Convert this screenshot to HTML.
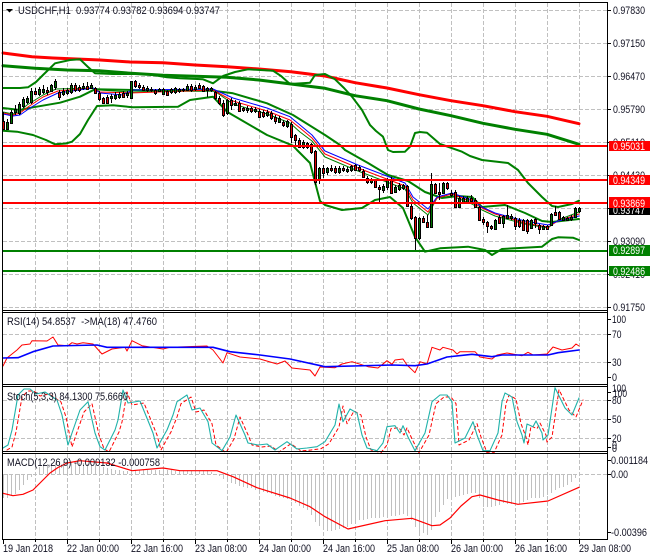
<!DOCTYPE html>
<html><head><meta charset="utf-8"><style>
html,body{margin:0;padding:0;background:#fff;width:650px;height:560px;overflow:hidden}
svg{display:block}
text{font-family:"Liberation Sans",sans-serif;font-size:11px;fill:#111122}
.w{fill:#fff}
.g{fill:none;stroke:#c0c0c0;stroke-width:1;stroke-dasharray:4 2;shape-rendering:crispEdges}
.l{fill:none;stroke-linejoin:round;stroke-linecap:round}
</style></head><body>
<svg width="650" height="560" viewBox="0 0 650 560" xmlns="http://www.w3.org/2000/svg">
<!-- grid -->
<path class="g" d="M3 10.5H607M3 43.5H607M3 76.5H607M3 109.5H607M3 142.5H607M3 175.5H607M3 208.5H607M3 241.5H607M3 274.5H607M3 307.5H607"/>
<path class="g" d="M35.5 3V310M67.5 3V310M99.5 3V310M131.5 3V310M163.5 3V310M195.5 3V310M227.5 3V310M259.5 3V310M291.5 3V310M323.5 3V310M355.5 3V310M387.5 3V310M419.5 3V310M451.5 3V310M483.5 3V310M515.5 3V310M547.5 3V310M579.5 3V310"/>
<path class="g" d="M3 334.5H607M3 362.5H607M35.5 313V384M67.5 313V384M99.5 313V384M131.5 313V384M163.5 313V384M195.5 313V384M227.5 313V384M259.5 313V384M291.5 313V384M323.5 313V384M355.5 313V384M387.5 313V384M419.5 313V384M451.5 313V384M483.5 313V384M515.5 313V384M547.5 313V384M579.5 313V384"/>
<path class="g" d="M3 400.5H607M3 419.5H607M3 438.5H607M35.5 387V451M67.5 387V451M99.5 387V451M131.5 387V451M163.5 387V451M195.5 387V451M227.5 387V451M259.5 387V451M291.5 387V451M323.5 387V451M355.5 387V451M387.5 387V451M419.5 387V451M451.5 387V451M483.5 387V451M515.5 387V451M547.5 387V451M579.5 387V451"/>
<path class="g" d="M3 474.5H607M35.5 454V539M67.5 454V539M99.5 454V539M131.5 454V539M163.5 454V539M195.5 454V539M227.5 454V539M259.5 454V539M291.5 454V539M323.5 454V539M355.5 454V539M387.5 454V539M419.5 454V539M451.5 454V539M483.5 454V539M515.5 454V539M547.5 454V539M579.5 454V539"/>

<!-- Bollinger / MAs -->
<polyline class="l" stroke="#ff0000" stroke-width="3" points="3,53 32,56.7 53,58 100,60 130,62 163,62.7 195,65 227,66.7 259,69 291,71.7 325,76 355,82.7 387,88 419,94.7 451,100.7 483,105.7 515,111.7 547,116.3 579,123.7"/>
<polyline class="l" stroke="#008000" stroke-width="3" points="3,65.7 35,68.3 67,70 99,70.7 131,73.3 163,75.3 195,76.3 227,77.3 259,80 291,84 325,88.3 355,95.7 387,100.7 419,109 451,115.7 483,123.3 515,129.3 547,134.3 579,144.3"/>
<polyline class="l" stroke="#008000" stroke-width="2" points="3,88 20,88 28,87.3 36,82 43,75 55,63.3 70,60 80,59.3 88,67 95,73.3 113,74 147,74 167,77.3 180,78.3 203,79.3 213,83.3 223,76 235,72 248,69.3 273,70.7 281,76 290,84 310,82.7 315,75 325,74 335,79.3 344,88 352,96.7 362,110 370,125 376,131 383,136.7 388,150 393,152 405,151.7 410,146.7 415,133 420,132 427,132.7 440,144 462,151.7 470,156 482,160 508,163 518,170 528,183 542,197 552,206 558,207 572,204 579,200.7"/>
<polyline class="l" stroke="#008000" stroke-width="2" points="3,108 20,110 33,107.3 60,102.7 80,96.7 95,89.3 133,90 173,90.7 213,90.7 233,93.3 267,103.3 293,115 325,135 340,145 345,150 368,163 388,175 408,181 425,192 442,198 458,196 472,197 482,207 505,205 525,213 542,221 552,222 579,219"/>
<polyline class="l" stroke="#008000" stroke-width="2" points="3,130.7 17,131.7 33,135 46,140 55,144.3 66,143.5 72,141.7 80,134 88,120 97,106 113,105.3 133,107.3 178,106.7 190,100 213,96.7 227,111.7 267,135 293,145.7 297,150 310,163 315,182 320,201 325,205 342,210 362,208 375,200 390,197 403,208 415,237 425,251.7 440,248.3 468,246.7 485,250 492,255 502,249 542,246.7 552,239 558,237.3 573,237.7 579,240"/>

<!-- thin MAs -->
<polyline class="l" stroke="#008000" stroke-width="1" points="3,112 13,114 20,111 27,105 43,95 56,89 93,88 99,90 130,92 213,90 233,104 267,114 290,123 300,132 312,141 325,157 358,171 392,184 405,189 413,203 428,215 437,198 452,196 472,204 482,210 495,216 525,224 548,228 558,220 579,212"/>
<polyline class="l" stroke="#ff0000" stroke-width="1" points="3,113 13,115 20,113 28,107 43,97 58,91 93,88 100,92 130,93 213,90 233,101 267,111 290,120 300,128 312,138 325,154 358,168 392,181 405,186 413,200 428,212 437,198 452,194 472,202 482,208 495,214 525,223 548,227 558,221 579,214"/>
<polyline class="l" stroke="#0000ff" stroke-width="1" points="3,114 13,116 20,115 30,108 43,100 58,93 93,88 100,93 123,95 132,90 213,89 233,98 267,108 290,116.7 300,125 312,135 325,151 358,165 392,178 405,183 413,197 428,209 437,197 452,193 472,200 482,207 495,213 525,221 548,225 558,221 579,216"/>

<!-- candles -->
<path fill="none" stroke="#000" stroke-width="1" shape-rendering="crispEdges" d="M3.5 112V130M7.5 119V130M11.5 110V124M15.5 105V115M19.5 102V115M23.5 97V108M27.5 96V104M31.5 88V104M35.5 88V95M39.5 87V96M43.5 85V94M47.5 87V95M51.5 84V92M55.5 79V90M59.5 90V100M63.5 88V96M67.5 88V95M71.5 83V94M75.5 83V92M79.5 85V92M83.5 83V90M87.5 82V90M91.5 83V89M95.5 87V94M99.5 91V101M103.5 97V104M107.5 95V104M111.5 94V103M115.5 92V100M119.5 92V99M123.5 91V98M127.5 91V98M131.5 81V99M135.5 80V88M139.5 83V89M143.5 85V91M147.5 86V92M151.5 87V92M155.5 89V95M159.5 88V92M163.5 88V95M167.5 90V96M171.5 88V94M175.5 87V94M179.5 88V93M183.5 88V92M187.5 84V91M191.5 84V92M195.5 85V91M199.5 83V89M203.5 85V92M207.5 87V97M211.5 87V92M215.5 91V100M219.5 96V105M223.5 100V117M227.5 99V115M231.5 98V110M235.5 100V106M239.5 101V112M243.5 107V112M247.5 106V113M251.5 107V113M255.5 107V113M259.5 109V118M263.5 110V118M267.5 110V117M271.5 111V120M275.5 115V124M279.5 116V123M283.5 120V127M287.5 120V128M291.5 122V143M295.5 134V146M299.5 138V148M303.5 140V149M307.5 142V149M311.5 143V154M315.5 150V185M319.5 167V184M323.5 165V178M327.5 167V175M331.5 165V172M335.5 166V174M339.5 166V174M343.5 166V172M347.5 167V173M351.5 165V172M355.5 164V171M359.5 165V172M363.5 169V178M367.5 176V184M371.5 178V184M375.5 179V188M379.5 185V203M383.5 184V193M387.5 178V190M391.5 177V194M395.5 185V193M399.5 183V191M403.5 184V190M407.5 185V207M411.5 202V220M415.5 216V250M419.5 217V240M423.5 216V223M427.5 215V228M431.5 173V228M435.5 183V194M439.5 183V200M443.5 182V194M447.5 182V190M451.5 190V197M455.5 190V208M459.5 196V208M463.5 196V204M467.5 196V204M471.5 195V202M475.5 198V208M479.5 206V221M483.5 217V225M487.5 221V233M491.5 225V230M495.5 219V230M499.5 215V224M503.5 215V228M507.5 205V219M511.5 214V220M515.5 217V230M519.5 218V228M523.5 219V231M527.5 219V234M531.5 219V229M535.5 218V228M539.5 224V234M543.5 225V230M547.5 225V230M551.5 213V226M555.5 206V216M559.5 211V220M563.5 216V221M567.5 217V221M571.5 215V221M575.5 207V218M579.5 207V213"/>
<path fill="#dd0000" stroke="#000" stroke-width="1" shape-rendering="crispEdges" d="M2.5 121.5h2v8h-2zM34.5 91.5h2v3h-2zM46.5 90.5h2v2h-2zM58.5 92.5h2v5h-2zM74.5 85.5h2v5h-2zM78.5 87.5h2v3h-2zM86.5 86.5h2v3h-2zM94.5 88.5h2v5h-2zM98.5 93.5h2v6h-2zM102.5 98.5h2v5h-2zM106.5 97.5h2v6h-2zM122.5 93.5h2v4h-2zM134.5 81.5h2v5h-2zM138.5 85.5h2v2h-2zM142.5 87.5h2v3h-2zM150.5 89.5h2v1h-2zM154.5 90.5h2v3h-2zM166.5 91.5h2v4h-2zM182.5 89.5h2v1h-2zM190.5 86.5h2v4h-2zM198.5 85.5h2v3h-2zM202.5 86.5h2v5h-2zM214.5 92.5h2v6h-2zM218.5 98.5h2v5h-2zM222.5 103.5h2v12h-2zM230.5 100.5h2v5h-2zM238.5 103.5h2v8h-2zM242.5 108.5h2v2h-2zM250.5 108.5h2v3h-2zM258.5 111.5h2v6h-2zM262.5 112.5h2v4h-2zM270.5 113.5h2v5h-2zM274.5 117.5h2v4h-2zM282.5 122.5h2v3h-2zM290.5 124.5h2v13h-2zM294.5 135.5h2v5h-2zM298.5 140.5h2v7h-2zM306.5 143.5h2v4h-2zM310.5 144.5h2v8h-2zM314.5 151.5h2v31h-2zM322.5 168.5h2v5h-2zM330.5 168.5h2v2h-2zM334.5 168.5h2v4h-2zM342.5 168.5h2v2h-2zM354.5 165.5h2v5h-2zM358.5 167.5h2v3h-2zM362.5 171.5h2v6h-2zM366.5 178.5h2v4h-2zM374.5 180.5h2v7h-2zM378.5 187.5h2v2h-2zM390.5 179.5h2v14h-2zM406.5 186.5h2v20h-2zM410.5 206.5h2v12h-2zM414.5 217.5h2v21h-2zM422.5 218.5h2v4h-2zM426.5 222.5h2v5h-2zM434.5 184.5h2v9h-2zM438.5 192.5h2v2h-2zM446.5 183.5h2v5h-2zM450.5 193.5h2v2h-2zM454.5 192.5h2v15h-2zM470.5 198.5h2v3h-2zM474.5 200.5h2v7h-2zM478.5 207.5h2v13h-2zM482.5 219.5h2v3h-2zM486.5 222.5h2v4h-2zM490.5 226.5h2v2h-2zM498.5 217.5h2v6h-2zM514.5 218.5h2v8h-2zM518.5 220.5h2v6h-2zM522.5 220.5h2v10h-2zM526.5 220.5h2v11h-2zM534.5 219.5h2v4h-2zM538.5 225.5h2v4h-2zM546.5 226.5h2v3h-2zM554.5 212.5h2v3h-2zM558.5 212.5h2v7h-2z"/>
<path fill="#007000" stroke="#000" stroke-width="1" shape-rendering="crispEdges" d="M6.5 122.5h2v7h-2zM10.5 112.5h2v11h-2zM14.5 109.5h2v3h-2zM18.5 104.5h2v9h-2zM22.5 99.5h2v7h-2zM26.5 98.5h2v4h-2zM30.5 91.5h2v11h-2zM38.5 89.5h2v5h-2zM42.5 89.5h2v3h-2zM50.5 85.5h2v6h-2zM54.5 81.5h2v6h-2zM62.5 91.5h2v3h-2zM66.5 90.5h2v3h-2zM70.5 85.5h2v7h-2zM82.5 86.5h2v2h-2zM90.5 85.5h2v3h-2zM110.5 96.5h2v2h-2zM114.5 95.5h2v3h-2zM118.5 94.5h2v3h-2zM126.5 93.5h2v2h-2zM130.5 81.5h2v17h-2zM146.5 88.5h2v2h-2zM158.5 89.5h2v2h-2zM162.5 89.5h2v5h-2zM170.5 89.5h2v3h-2zM174.5 88.5h2v4h-2zM178.5 89.5h2v2h-2zM186.5 86.5h2v4h-2zM194.5 87.5h2v2h-2zM206.5 88.5h2v2h-2zM210.5 88.5h2v2h-2zM226.5 100.5h2v13h-2zM234.5 103.5h2v2h-2zM246.5 108.5h2v2h-2zM254.5 109.5h2v2h-2zM266.5 112.5h2v3h-2zM278.5 118.5h2v4h-2zM286.5 121.5h2v5h-2zM302.5 142.5h2v5h-2zM318.5 168.5h2v12h-2zM326.5 168.5h2v4h-2zM338.5 168.5h2v4h-2zM346.5 169.5h2v2h-2zM350.5 166.5h2v4h-2zM370.5 180.5h2v2h-2zM382.5 186.5h2v4h-2zM386.5 179.5h2v8h-2zM394.5 187.5h2v5h-2zM398.5 185.5h2v4h-2zM402.5 185.5h2v3h-2zM418.5 218.5h2v20h-2zM430.5 184.5h2v43h-2zM442.5 183.5h2v10h-2zM458.5 198.5h2v9h-2zM462.5 198.5h2v4h-2zM466.5 198.5h2v5h-2zM494.5 220.5h2v9h-2zM502.5 216.5h2v7h-2zM506.5 215.5h2v3h-2zM510.5 216.5h2v2h-2zM530.5 220.5h2v8h-2zM542.5 226.5h2v3h-2zM550.5 214.5h2v11h-2zM562.5 217.5h2v3h-2zM566.5 218.5h2v2h-2zM570.5 217.5h2v2h-2zM574.5 208.5h2v9h-2zM578.5 208.5h2v3h-2z"/>

<!-- horizontal levels -->
<g stroke-width="2" shape-rendering="crispEdges">
<path stroke="#ff0000" d="M3 146H608M3 180H608M3 203H608"/>
<path stroke="#008000" d="M3 251H608M3 271H608"/>
</g>

<!-- RSI -->
<polyline class="l" stroke="#ff0000" stroke-width="1" points="3,366 7,358 17,350 22,345 30,344 32,340.7 47,341 53,337 58,345 68,345.7 72,342.7 77,344 83,342.7 93,344 102,354 112,349 125,347.3 127,351 132,340.7 142,345.7 163,349 170,347.3 207,346 213,350 223,363 227,352.7 240,357 260,359 277,364 285,361 292,368 310,370 315,376 320,367 335,367.7 342,364 352,361.7 368,366.7 378,368 387,360.7 392,364.3 395,360 403,359 407,365 415,372.7 420,361.7 427,364 432,347.3 440,350 443,347.3 453,350 457,354 460,351.7 475,351.7 480,357 492,359 497,355 507,353 522,355.7 528,352.3 533,355 547,354 553,347 562,350 572,348 576,344 579,346"/>
<polyline class="l" stroke="#0000ff" stroke-width="1.6" points="3,358 18,357.7 33,351.7 53,346 97,345 107,347.3 213,347.3 230,351.7 260,355 290,359 325,366.7 392,365 415,365.7 427,364 447,357 472,354.3 492,356.7 502,355 548,355 558,352.7 579,350"/>

<!-- Stoch -->
<defs><polyline id="st" points="3,448 8,445 12,430 18,395 24,389 30,389 36,394 45,392 57,400 62,415 68,445 72,433 80,410 88,401.7 95,433 100,446.7 105,450 110,440 115,430 118,420 123,390 128,403 140,401 153,433 157,448 163,437 167,430 173,415 177,401.7 187,395 192,410 200,408 208,421.7 212,443 222,450.7 230,437 236,415 245,435 248,443 258,445 267,444 275,450 287,441.7 297,449 307,448 317,446.7 325,441.7 335,425 339,404 343,421.7 350,409 357,413 362,435 367,448 377,450.7 383,443 387,426.7 395,425.7 400,433 403,425.7 408,437 415,450.7 425,433 432,401.7 440,395 447,395 452,401.7 455,443 465,438 473,421.7 477,435 483,450.7 490,450.7 498,433 502,401.7 505,393 512,397 517,421.7 522,435 524,443 527,424 533,426.7 536,421 542,433 543,440 548,435 555,387.7 565,408 572,415 579,398"/></defs>
<use href="#st" class="l" transform="translate(4,2)" style="fill:none;stroke:#ff0000;stroke-width:1;stroke-dasharray:3 3"/>
<use href="#st" class="l" style="fill:none;stroke:#20b2aa;stroke-width:1.1"/>

<!-- MACD histogram -->
<path fill="none" stroke="#c0c0c0" stroke-width="1" shape-rendering="crispEdges" d="M3.5 474V498M7.5 474V498M11.5 474V496M15.5 474V494M19.5 474V490M23.5 474V485M27.5 474V480M31.5 474V477M35.5 474V473M39.5 474V467M43.5 474V465M47.5 474V464M51.5 474V463M55.5 474V463M59.5 474V462M63.5 474V462M67.5 474V462M71.5 474V462M75.5 474V463M79.5 474V463M83.5 474V463M87.5 474V464M91.5 474V464M95.5 474V465M99.5 474V466M103.5 474V467M107.5 474V468M111.5 474V469M115.5 474V470M119.5 474V470M123.5 474V471M127.5 474V471M131.5 474V470M135.5 474V470M139.5 474V470M143.5 474V470M147.5 474V470M151.5 474V470M155.5 474V470M159.5 474V470M163.5 474V470M167.5 474V470M171.5 474V470M175.5 474V471M179.5 474V471M183.5 474V471M187.5 474V471M191.5 474V471M195.5 474V471M199.5 474V471M203.5 474V471M207.5 474V471M211.5 474V472M219.5 474V476M223.5 474V479M227.5 474V481M231.5 474V483M235.5 474V484M239.5 474V486M243.5 474V487M247.5 474V488M251.5 474V488M255.5 474V490M259.5 474V491M263.5 474V492M267.5 474V493M271.5 474V494M275.5 474V496M279.5 474V497M283.5 474V498M287.5 474V499M291.5 474V501M295.5 474V503M299.5 474V506M303.5 474V508M307.5 474V510M311.5 474V515M315.5 474V522M319.5 474V526M323.5 474V529M327.5 474V531M331.5 474V531M335.5 474V530M339.5 474V529M343.5 474V528M347.5 474V527M351.5 474V524M355.5 474V522M359.5 474V520M363.5 474V520M367.5 474V519M371.5 474V518M375.5 474V518M379.5 474V518M383.5 474V517M387.5 474V517M391.5 474V516M395.5 474V516M399.5 474V515M403.5 474V514M407.5 474V516M411.5 474V520M415.5 474V527M419.5 474V532M423.5 474V533M427.5 474V535M431.5 474V530M435.5 474V517M439.5 474V512M443.5 474V505M447.5 474V499M451.5 474V498M455.5 474V497M459.5 474V496M463.5 474V495M467.5 474V494M471.5 474V493M475.5 474V493M479.5 474V498M483.5 474V507M487.5 474V507M491.5 474V507M495.5 474V506M499.5 474V505M503.5 474V503M507.5 474V504M511.5 474V504M515.5 474V505M519.5 474V504M523.5 474V502M527.5 474V500M531.5 474V498M535.5 474V498M539.5 474V498M543.5 474V497M547.5 474V495M551.5 474V493M555.5 474V490M559.5 474V488M563.5 474V487M567.5 474V485M571.5 474V482M575.5 474V478M579.5 474V476"/>
<polyline class="l" stroke="#ff0000" stroke-width="1.2" points="3,493.3 13,495.7 23,494.3 33,490 42,481 50,473 58,467.5 67,463 80,460.7 107,463 132,470.7 163,468 180,470.7 217,470.7 233,476.7 257,487.7 290,498 310,506.7 325,516.7 348,529 385,520.7 412,518.3 432,525.7 440,525 450,518 461,506 472,496.7 480,495 498,500 518,504.3 548,501 579,487.3"/>

<!-- frames -->
<g fill="none" stroke="#000" stroke-width="1" shape-rendering="crispEdges">
<path d="M2.5 2.5H607.5V539.5H2.5Z"/>
<path d="M2.5 310.5H607.5M2.5 312.5H607.5M2.5 384.5H607.5M2.5 386.5H607.5M2.5 451.5H607.5M2.5 453.5H607.5"/>
<path d="M608 10.5h3M608 43.5h3M608 76.5h3M608 109.5h3M608 142.5h3M608 175.5h3M608 208.5h3M608 241.5h3M608 274.5h3M608 307.5h3M608 319.5h3M608 334.5h3M608 362.5h3M608 377.5h3M608 392.5h3M608 400.5h3M608 419.5h3M608 438.5h3M608 447.5h3M608 460.5h3M608 474.5h3M608 532.5h3"/>
<path d="M3.5 540v4M67.5 540v4M131.5 540v4M195.5 540v4M259.5 540v4M323.5 540v4M387.5 540v4M451.5 540v4M515.5 540v4M579.5 540v4M35.5 540v2M99.5 540v2M163.5 540v2M227.5 540v2M291.5 540v2M355.5 540v2M419.5 540v2M483.5 540v2M547.5 540v2"/>
</g>

<!-- header and labels -->
<polygon points="6,9 13,9 9.5,12.5" fill="#000"/>
<text x="18" y="14" textLength="202" lengthAdjust="spacingAndGlyphs" xml:space="preserve">USDCHF,H1  0.93774 0.93782 0.93694 0.93747</text>
<text x="7" y="325" textLength="150" lengthAdjust="spacingAndGlyphs" xml:space="preserve">RSI(14) 54.8537  -&gt;MA(18) 47.4760</text>
<text x="7" y="400" textLength="121" lengthAdjust="spacingAndGlyphs">Stoch(5,3,3) 84.1300 75.6660</text>
<text x="7" y="466" textLength="153" lengthAdjust="spacingAndGlyphs">MACD(12,26,9) -0.000132 -0.000758</text>

<!-- price axis -->
<g>
<text x="613" y="14" textLength="32" lengthAdjust="spacingAndGlyphs">0.97830</text>
<text x="613" y="47" textLength="32" lengthAdjust="spacingAndGlyphs">0.97150</text>
<text x="613" y="80" textLength="32" lengthAdjust="spacingAndGlyphs">0.96470</text>
<text x="613" y="113" textLength="32" lengthAdjust="spacingAndGlyphs">0.95790</text>
<text x="613" y="146" textLength="32" lengthAdjust="spacingAndGlyphs">0.95110</text>
<text x="613" y="179" textLength="32" lengthAdjust="spacingAndGlyphs">0.94430</text>
<text x="613" y="245" textLength="32" lengthAdjust="spacingAndGlyphs">0.93090</text>
<text x="613" y="278" textLength="32" lengthAdjust="spacingAndGlyphs">0.92410</text>
<text x="613" y="311" textLength="32" lengthAdjust="spacingAndGlyphs">0.91750</text>
</g>
<rect x="609" y="141" width="41" height="10" fill="#ff0000"/>
<text class="w" x="613" y="150" textLength="32" lengthAdjust="spacingAndGlyphs">0.95031</text>
<rect x="609" y="175" width="41" height="10" fill="#ff0000"/>
<text class="w" x="613" y="184" textLength="32" lengthAdjust="spacingAndGlyphs">0.94349</text>
<rect x="609" y="207" width="41" height="8" fill="#000"/>
<text class="w" x="613" y="214" textLength="32" lengthAdjust="spacingAndGlyphs">0.93747</text>
<rect x="609" y="197" width="41" height="11" fill="#ff0000"/>
<text class="w" x="613" y="207" textLength="32" lengthAdjust="spacingAndGlyphs">0.93869</text>
<rect x="609" y="245" width="41" height="11" fill="#008000"/>
<text class="w" x="613" y="254" textLength="32" lengthAdjust="spacingAndGlyphs">0.92897</text>
<rect x="609" y="266" width="41" height="10" fill="#008000"/>
<text class="w" x="613" y="275" textLength="32" lengthAdjust="spacingAndGlyphs">0.92486</text>

<text x="612" y="323" textLength="14" lengthAdjust="spacingAndGlyphs">100</text>
<text x="612" y="338" textLength="9.5" lengthAdjust="spacingAndGlyphs">70</text>
<text x="612" y="366" textLength="9.5" lengthAdjust="spacingAndGlyphs">30</text>
<text x="612" y="381" textLength="5" lengthAdjust="spacingAndGlyphs">0</text>
<text x="612" y="392" textLength="14" lengthAdjust="spacingAndGlyphs">100</text>
<text x="613" y="397" textLength="14" lengthAdjust="spacingAndGlyphs">100</text>
<text x="612" y="404" textLength="9.5" lengthAdjust="spacingAndGlyphs">80</text>
<text x="612" y="423" textLength="9.5" lengthAdjust="spacingAndGlyphs">50</text>
<text x="612" y="442" textLength="9.5" lengthAdjust="spacingAndGlyphs">20</text>
<text x="612" y="449" textLength="5" lengthAdjust="spacingAndGlyphs">0</text>
<text x="612" y="452" textLength="5" lengthAdjust="spacingAndGlyphs">0</text>
<text x="611" y="464" textLength="37" lengthAdjust="spacingAndGlyphs">0.001184</text>
<text x="611" y="478" textLength="17" lengthAdjust="spacingAndGlyphs">0.00</text>
<text x="611" y="536" textLength="36" lengthAdjust="spacingAndGlyphs">-0.00396</text>

<!-- time axis -->
<text x="3" y="552" textLength="50" lengthAdjust="spacingAndGlyphs">19 Jan 2018</text>
<text x="67" y="552" textLength="52" lengthAdjust="spacingAndGlyphs">22 Jan 00:00</text>
<text x="131" y="552" textLength="52" lengthAdjust="spacingAndGlyphs">22 Jan 16:00</text>
<text x="195" y="552" textLength="52" lengthAdjust="spacingAndGlyphs">23 Jan 08:00</text>
<text x="259" y="552" textLength="52" lengthAdjust="spacingAndGlyphs">24 Jan 00:00</text>
<text x="323" y="552" textLength="52" lengthAdjust="spacingAndGlyphs">24 Jan 16:00</text>
<text x="387" y="552" textLength="52" lengthAdjust="spacingAndGlyphs">25 Jan 08:00</text>
<text x="451" y="552" textLength="52" lengthAdjust="spacingAndGlyphs">26 Jan 00:00</text>
<text x="515" y="552" textLength="52" lengthAdjust="spacingAndGlyphs">26 Jan 16:00</text>
<text x="579" y="552" textLength="52" lengthAdjust="spacingAndGlyphs">29 Jan 08:00</text>
</svg>
</body></html>
